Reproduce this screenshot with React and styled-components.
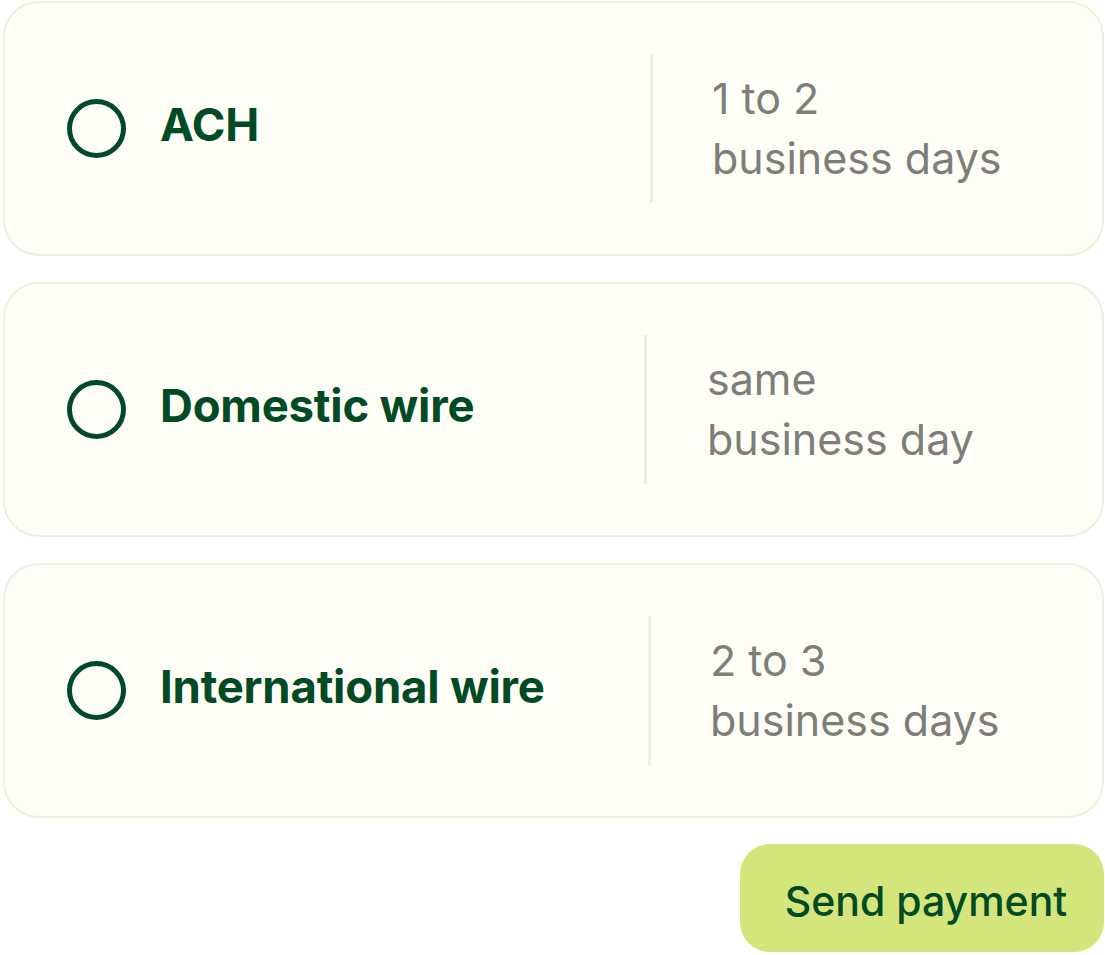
import React from 'react';
import styled, { createGlobalStyle } from 'styled-components';

const GlobalStyle = createGlobalStyle`
  body {
    margin: 0;
    background: #fff;
    font-family: Inter, "Noto Sans", sans-serif;
  }
`;

const Page = styled.div`
  display: flex;
  flex-direction: column;
  align-items: flex-end;
  gap: 26px;
  padding: 1px 1px 0 3px;
  width: 1101px;
`;

const Card = styled.label`
  box-sizing: border-box;
  display: grid;
  grid-template-columns: ${props => props.split}px 3px 1fr;
  align-items: center;
  width: 100%;
  height: 255px;
  padding: 0 0 0 62px;
  background: #fefef6;
  border: 2px solid #efefdd;
  border-radius: 36px;
  cursor: pointer;
`;

const Option = styled.div`
  display: flex;
  align-items: center;
  gap: 34px;
`;

const Radio = styled.span`
  box-sizing: border-box;
  flex: none;
  width: 59px;
  height: 59px;
  border-radius: 50%;
  border: 5px solid #004b23;
`;

const Label = styled.span`
  font-size: 45.5px;
  font-weight: 700;
  color: #004b23;
  letter-spacing: -0.2px;
  margin-top: -9px;
`;

const Divider = styled.span`
  width: 3px;
  height: 149px;
  background: #eeeedc;
`;

const Timing = styled.div`
  padding-left: ${props => props.inset}px;
  font-size: 43px;
  line-height: 60px;
  color: #7e7e78;
  margin-top: -2px;
`;

const SendButton = styled.button`
  width: 364px;
  height: 108px;
  border: none;
  border-radius: 30px;
  background: #d4e57b;
  color: #004b23;
  font-family: Inter, "Noto Sans", sans-serif;
  font-size: 41px;
  font-weight: 500;
  padding: 6px 0 0 8px;
  cursor: pointer;
`;

const options = [
  { name: 'ACH', lines: ['1 to 2', 'business days'], split: 583, inset: 59 },
  { name: 'Domestic wire', lines: ['same', 'business day'], split: 577, inset: 60 },
  { name: 'International wire', lines: ['2 to 3', 'business days'], split: 581, inset: 59 },
];

const App = () => (
  <>
    <GlobalStyle />
    <Page>
      {options.map(o => (
        <Card key={o.name} split={o.split}>
          <Option>
            <Radio />
            <Label>{o.name}</Label>
          </Option>
          <Divider />
          <Timing inset={o.inset}>
            {o.lines[0]}
            <br />
            {o.lines[1]}
          </Timing>
        </Card>
      ))}
      <SendButton>Send payment</SendButton>
    </Page>
  </>
);

export default App;
